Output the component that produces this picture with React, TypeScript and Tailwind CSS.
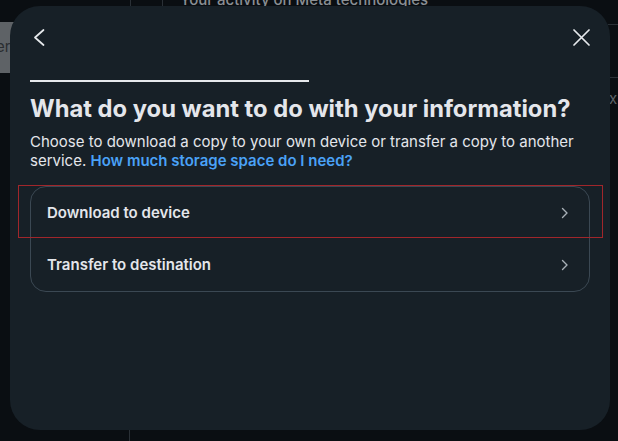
import React from "react";

function Chevron({ className = "" }: { className?: string }) {
  return (
    <svg width="8" height="12" viewBox="0 0 8 12" className={className} fill="none">
      <path d="M1.5 1.5L6 6L1.5 10.5" stroke="currentColor" strokeWidth="1.4" strokeLinecap="round" strokeLinejoin="round" />
    </svg>
  );
}

function OptionRow({ label }: { label: string }) {
  return (
    <div className="flex items-center justify-between h-[52px] pl-[16px] pr-[20px]">
      <span className="text-[15px] font-semibold text-[#e4e6eb]">{label}</span>
      <Chevron className="text-[#a8b0b7]" />
    </div>
  );
}

export default function App() {
  return (
    <div
      className="relative w-[618px] h-[441px] overflow-hidden bg-[#0a0e12]"
      style={{ fontFamily: "Inter, 'Noto Sans', sans-serif" }}
    >
      {/* background page fragments */}
      <div className="absolute left-[130px] top-0 h-[20px] w-px bg-[#2a3036]" />
      <div className="absolute left-[162px] top-0 h-[20px] w-px bg-[#2a3036]" />
      <div className="absolute left-[180px] top-[-11px] text-[15px] font-medium text-[#8a8f94] whitespace-nowrap">
        Your activity on Meta technologies
      </div>
      <div className="absolute left-0 top-[22px] h-[51px] w-[20px] bg-[#5e6266] flex items-center">
        <span className="text-[15px] text-[#2a2d30] ml-[-4px]">er</span>
      </div>
      <div className="absolute right-0 top-[24px] h-px w-[10px] bg-[#2a3036]" />
      <div className="absolute right-0 top-[77px] h-px w-[10px] bg-[#2a3036]" />
      <div className="absolute left-[609px] top-[88px] text-[15px] text-[#5d6368]">xp</div>
      <div className="absolute left-[129px] top-[425px] h-[16px] w-px bg-[#2a3036]" />

      {/* modal */}
      <div className="absolute left-[10px] top-[6px] w-[600px] h-[424px] rounded-[30px] bg-[#172027] px-[20px] pt-[23px]">
        <div className="flex items-center justify-between h-[17px] pl-[3px]">
          <svg width="12" height="17" viewBox="0 0 12 17" fill="none" className="text-[#e6e9ec]">
            <path d="M10.5 1L2 8.5L10.5 16" stroke="currentColor" strokeWidth="1.7" strokeLinecap="round" strokeLinejoin="round" />
          </svg>
          <svg width="17" height="17" viewBox="0 0 17 17" fill="none" className="text-[#e6e9ec]">
            <path d="M1 1L16 16M16 1L1 16" stroke="currentColor" strokeWidth="1.7" strokeLinecap="round" />
          </svg>
        </div>
        <div className="mt-[34px] h-[2px] w-[279px] bg-[#e6e9ec]" />
        <h1 className="mt-[13px] text-[23.75px] leading-[28px] font-bold text-[#e4e6eb] whitespace-nowrap">
          What do you want to do with your information?
        </h1>
        <p className="mt-[9px] text-[15px] leading-[19px] text-[#e4e6eb]">
          Choose to download a copy to your own device or transfer a copy to another service.{" "}
          <span className="font-semibold text-[#4aa2f7]">How much storage space do I need?</span>
        </p>
        <div className="mt-[16px] rounded-[16px] border border-[#3b4853]">
          <OptionRow label="Download to device" />
          <OptionRow label="Transfer to destination" />
        </div>
      </div>

      {/* annotation highlight */}
      <div className="absolute left-[18px] top-[185px] w-[585px] h-[53px] border border-[#a1262b]" />
    </div>
  );
}
